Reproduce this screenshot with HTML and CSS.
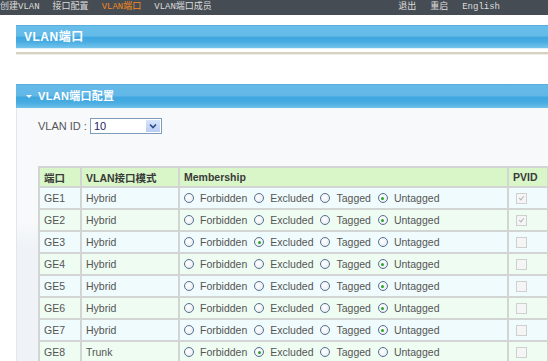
FILE: index.html
```html
<!DOCTYPE html>
<html>
<head>
<meta charset="utf-8">
<link rel="stylesheet" href="styles.css">
</head>
<body>
<div class="nav">
  <div class="nav-left">
    <span class="nav-item">创建VLAN</span>
    <span class="nav-item">接口配置</span>
    <span class="nav-item active">VLAN端口</span>
    <span class="nav-item">VLAN端口成员</span>
  </div>
  <div class="nav-right">
    <span class="nav-item">退出</span>
    <span class="nav-item">重启</span>
    <span class="nav-item">English</span>
  </div>
</div>
<div class="content">
  <div class="title-bar">VLAN端口</div>
  <div class="rule"></div>
  <div class="section">
    <div class="section-bar"><span class="arrow"></span>VLAN端口配置</div>
    <div class="panel">
      <div class="vid-row">
        <span class="vid-label">VLAN ID :</span>
        <div class="select"><span class="select-val">10</span><span class="select-btn"><svg width="8" height="6" viewBox="0 0 8 6"><path d="M1 1.5 L4 4.5 L7 1.5" fill="none" stroke="#2b4a8a" stroke-width="1.6"/></svg></span></div>
      </div>
      <table class="ports">
        <colgroup><col class="c1"><col class="c2"><col class="c3"><col class="c4"></colgroup>
        <tr class="head"><td>端口</td><td>VLAN接口模式</td><td>Membership</td><td>PVID</td></tr>
        <tr class="odd"><td>GE1</td><td>Hybrid</td><td><div class="opts"><span class="opt"><i class="radio"></i>Forbidden</span><span class="opt"><i class="radio"></i>Excluded</span><span class="opt"><i class="radio"></i>Tagged</span><span class="opt"><i class="radio on"></i>Untagged</span></div></td><td><i class="chk on"></i></td></tr>
        <tr class="even"><td>GE2</td><td>Hybrid</td><td><div class="opts"><span class="opt"><i class="radio"></i>Forbidden</span><span class="opt"><i class="radio"></i>Excluded</span><span class="opt"><i class="radio"></i>Tagged</span><span class="opt"><i class="radio on"></i>Untagged</span></div></td><td><i class="chk on"></i></td></tr>
        <tr class="odd"><td>GE3</td><td>Hybrid</td><td><div class="opts"><span class="opt"><i class="radio"></i>Forbidden</span><span class="opt"><i class="radio on"></i>Excluded</span><span class="opt"><i class="radio"></i>Tagged</span><span class="opt"><i class="radio"></i>Untagged</span></div></td><td><i class="chk"></i></td></tr>
        <tr class="even"><td>GE4</td><td>Hybrid</td><td><div class="opts"><span class="opt"><i class="radio"></i>Forbidden</span><span class="opt"><i class="radio"></i>Excluded</span><span class="opt"><i class="radio"></i>Tagged</span><span class="opt"><i class="radio on"></i>Untagged</span></div></td><td><i class="chk"></i></td></tr>
        <tr class="odd"><td>GE5</td><td>Hybrid</td><td><div class="opts"><span class="opt"><i class="radio"></i>Forbidden</span><span class="opt"><i class="radio"></i>Excluded</span><span class="opt"><i class="radio"></i>Tagged</span><span class="opt"><i class="radio on"></i>Untagged</span></div></td><td><i class="chk"></i></td></tr>
        <tr class="even"><td>GE6</td><td>Hybrid</td><td><div class="opts"><span class="opt"><i class="radio"></i>Forbidden</span><span class="opt"><i class="radio"></i>Excluded</span><span class="opt"><i class="radio"></i>Tagged</span><span class="opt"><i class="radio on"></i>Untagged</span></div></td><td><i class="chk"></i></td></tr>
        <tr class="odd"><td>GE7</td><td>Hybrid</td><td><div class="opts"><span class="opt"><i class="radio"></i>Forbidden</span><span class="opt"><i class="radio"></i>Excluded</span><span class="opt"><i class="radio"></i>Tagged</span><span class="opt"><i class="radio on"></i>Untagged</span></div></td><td><i class="chk"></i></td></tr>
        <tr class="even"><td>GE8</td><td>Trunk</td><td><div class="opts"><span class="opt"><i class="radio"></i>Forbidden</span><span class="opt"><i class="radio on"></i>Excluded</span><span class="opt"><i class="radio"></i>Tagged</span><span class="opt"><i class="radio"></i>Untagged</span></div></td><td><i class="chk"></i></td></tr>
      </table>
    </div>
  </div>
</div>
</body>
</html>
```
FILE: styles.css
```css
html, body {
  margin: 0;
  padding: 0;
  background: #ffffff;
  overflow: hidden;
}
body {
  width: 548px;
  height: 361px;
  font-family: "Liberation Sans", Arial, "Noto Sans CJK SC", sans-serif;
  font-size: 11px;
  color: #4a4a4a;
}
.nav {
  height: 15px;
  background: #464c53;
  display: flex;
  justify-content: space-between;
  align-items: center;
  font-family: "Liberation Mono", "Noto Sans CJK SC", monospace;
  font-size: 9px;
  color: #dcdcdc;
}
.nav-left {
  display: flex;
  gap: 13px;
}
.nav-right {
  display: flex;
  gap: 14px;
  margin-right: 48px;
}
.nav-item {
  line-height: 15px;
  white-space: nowrap;
}
.nav-item.active {
  color: #f0891c;
}
.content {
  padding-left: 16px;
}
.title-bar {
  margin-top: 10px;
  height: 22px;
  line-height: 22px;
  padding-left: 8px;
  color: #ffffff;
  font-weight: bold;
  font-size: 12px;
  letter-spacing: 0.5px;
  border-top: 1px solid #5aaedc;
  background: linear-gradient(#68bee9 0%, #64bbe8 45%, #3fa6df 52%, #48ace2 72%, #74c4ec 100%);
  box-shadow: 0 1px 0 #dff1fb;
}
.rule {
  margin-top: 4px;
  height: 2px;
  background: #d6d2c2;
  border-bottom: 1px solid #efede6;
}
.section {
  margin-top: 29px;
}
.section-bar {
  height: 23px;
  line-height: 23px;
  display: flex;
  align-items: center;
  padding-left: 10px;
  color: #ffffff;
  font-weight: bold;
  font-size: 11px;
  letter-spacing: 0.3px;
  background: linear-gradient(#64b9e7 0%, #62b8e7 45%, #3ea6df 55%, #4aade2 78%, #6fc1ea 100%);
  border-top: 1px solid #5aaedc;
}
.arrow {
  width: 0;
  height: 0;
  border-left: 3px solid transparent;
  border-right: 3px solid transparent;
  border-top: 3px solid #ffffff;
  margin-right: 6px;
}
.panel {
  border-left: 1px solid #e3e7eb;
  background: linear-gradient(#f8f9fb 0%, #f7f9fb 45%, #eff3f7 55%, #eff3f7 100%);
  padding: 10px 0 0 21px;
  height: 244px;
  overflow: hidden;
}
.vid-row {
  display: flex;
  align-items: center;
  height: 16px;
}
.vid-label {
  color: #555555;
  margin-right: 3px;
}
.select {
  width: 70px;
  height: 14px;
  border: 1px solid #7f9db9;
  background: #ffffff;
  display: flex;
  justify-content: space-between;
  align-items: center;
}
.select-val {
  padding-left: 3px;
  color: #2a2060;
  font-size: 11px;
}
.select-btn {
  width: 14px;
  height: 12px;
  margin-right: 1px;
  background: linear-gradient(#d8e4fb, #b9cdf3);
  display: flex;
  align-items: center;
  justify-content: center;
}
.ports {
  margin-top: 32px;
  border-collapse: collapse;
  table-layout: fixed;
  width: 509px;
  font-size: 10.5px;
}
.c1 { width: 42px; }
.c2 { width: 98px; }
.c3 { width: 329px; }
.c4 { width: 40px; }
.ports td {
  border: 2px solid #d3d5d5;
  height: 20px;
  padding: 0 0 0 4px;
  white-space: nowrap;
  overflow: hidden;
  color: #555555;
}
.ports tr.head td {
  height: 18px;
  background: #d8f6c8;
  font-weight: bold;
  color: #3a3a3a;
}
.ports tr.odd td { background: #effbfc; }
.ports tr.even td { background: #eefcf2; }
.opts {
  display: flex;
  align-items: center;
}
.opt {
  display: flex;
  align-items: center;
  margin-right: 7px;
}
.radio {
  width: 8px;
  height: 8px;
  border: 1px solid #56708f;
  border-radius: 50%;
  background: radial-gradient(circle at 40% 40%, #ffffff, #e3e8ee);
  margin-right: 6px;
  position: relative;
  flex: none;
}
.radio.on::after {
  content: "";
  position: absolute;
  left: 2.5px;
  top: 2.5px;
  width: 3px;
  height: 3px;
  border-radius: 50%;
  background: #2aa52a;
}
.chk {
  display: block;
  width: 9px;
  height: 9px;
  border: 1px solid #cfcfcf;
  background: #f5f5f5;
  margin-left: 3px;
  position: relative;
}
.chk.on::after {
  content: "";
  position: absolute;
  left: 3px;
  top: 1px;
  width: 2px;
  height: 4px;
  border-right: 1px solid #b4b4b4;
  border-bottom: 1px solid #b4b4b4;
  transform: rotate(40deg);
}
```
